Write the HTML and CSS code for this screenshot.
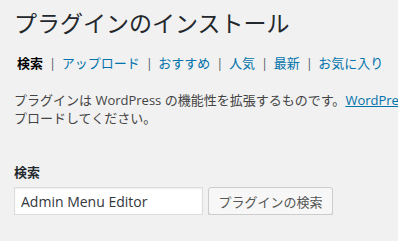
FILE: index.html
```html
<!DOCTYPE html>
<html lang="ja">
<head>
<meta charset="utf-8">
<title>プラグインのインストール</title>
<link rel="stylesheet" href="styles.css">
</head>
<body>
<div class="wrap">
  <h1 class="title">プラグインのインストール</h1>
  <ul class="tabs">
    <li><span class="current">検索</span><span class="sep">|</span></li>
    <li><a href="#">アップロード</a><span class="sep">|</span></li>
    <li><a href="#">おすすめ</a><span class="sep">|</span></li>
    <li><a href="#">人気</a><span class="sep">|</span></li>
    <li><a href="#">最新</a><span class="sep">|</span></li>
    <li><a href="#">お気に入り</a></li>
  </ul>
  <p class="desc">プラグインは WordPress の機能性を拡張するものです。<a href="#">WordPress プラグインディレクトリ</a>からプラグインを自動的にインストールするか、このページで .zip 形式のプラグインをアッ<br>プロードしてください。</p>
  <div class="label">検索</div>
  <form class="search">
    <input class="field" type="text" value="Admin Menu Editor">
    <button class="btn" type="button">プラグインの検索</button>
  </form>
</div>
</body>
</html>
```
FILE: styles.css
```css
html, body {
  margin: 0;
  padding: 0;
  background: #f1f1f1;
  overflow: hidden;
}
body {
  font-family: "Open Sans", "Noto Sans CJK JP", sans-serif;
  color: #444;
  font-size: 13px;
}
.wrap {
  padding: 0 14px;
}
.title {
  margin: 9px 0 0;
  font-size: 23px;
  line-height: 29px;
  font-weight: 400;
  color: #23282d;
  white-space: nowrap;
}
.tabs {
  list-style: none;
  margin: 16px 0 0;
  padding: 0 0 0 3px;
  display: flex;
  line-height: 18px;
  white-space: nowrap;
}
.tabs a {
  color: #0073aa;
  text-decoration: none;
}
.current {
  color: #000;
  font-weight: 600;
}
.sep {
  color: #555d66;
  margin: 0 5.5px 0 6px;
}
.desc {
  margin: 19px 0 0;
  line-height: 18px;
  white-space: nowrap;
}
.desc a {
  color: #0073aa;
  text-decoration: underline;
}
.label {
  margin-top: 36px;
  line-height: 18px;
  font-weight: 600;
  color: #23282d;
}
.search {
  margin-top: 6px;
  display: flex;
  gap: 5px;
}
.field {
  box-sizing: border-box;
  width: 189px;
  height: 28px;
  margin: 0;
  padding: 0 6px;
  border: 1px solid #ddd;
  background: #fff;
  box-shadow: inset 0 1px 2px rgba(0,0,0,.07);
  font-family: "Open Sans", "Noto Sans CJK JP", sans-serif;
  font-size: 14px;
  color: #32373c;
}
.btn {
  box-sizing: border-box;
  width: 125px;
  height: 28px;
  margin: 0;
  padding: 0;
  white-space: nowrap;
  border: 1px solid #ccc;
  border-radius: 3px;
  background: #f7f7f7;
  box-shadow: 0 1px 0 #ccc;
  font-family: "Open Sans", "Noto Sans CJK JP", sans-serif;
  font-size: 13px;
  color: #555;
}
```
